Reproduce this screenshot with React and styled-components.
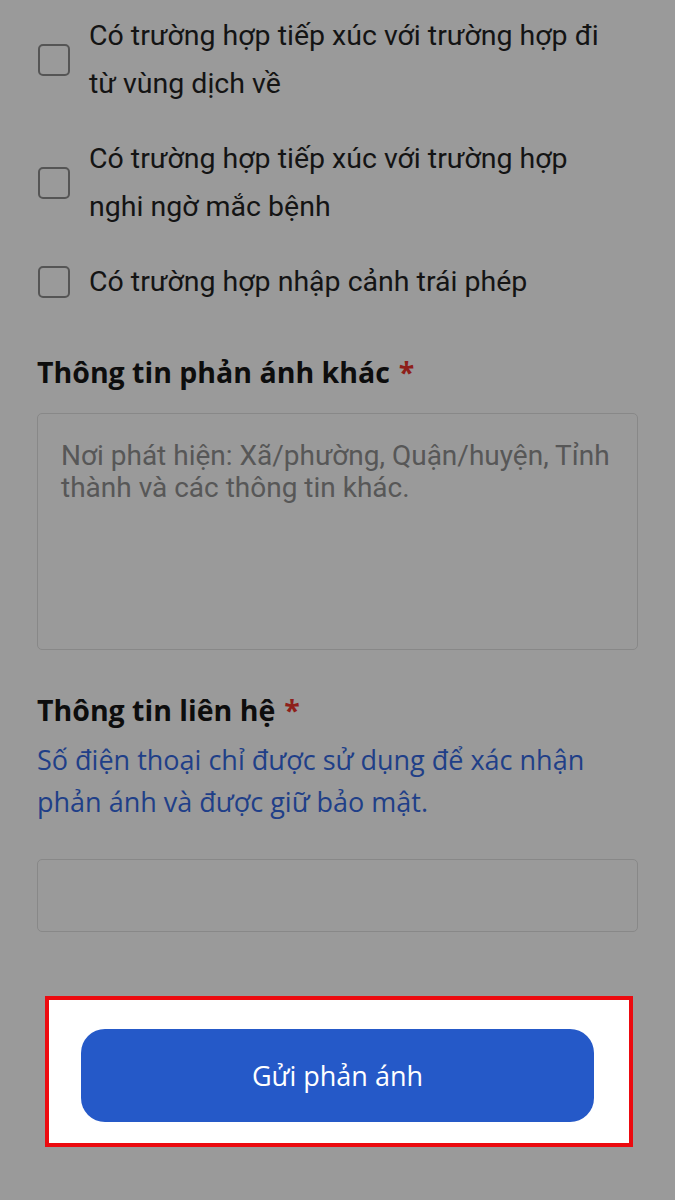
import React from "react";
import styled, { createGlobalStyle } from "styled-components";

const Global = createGlobalStyle`
  html, body { margin: 0; padding: 0; background: #9a9a9a; }
  * { box-sizing: border-box; }
`;

const Page = styled.div`
  width: 675px;
  min-height: 1200px;
  background: #9a9a9a;
  padding: 12px 37px 0 37px;
  display: flex;
  flex-direction: column;
`;

const CheckList = styled.div`
  display: flex;
  flex-direction: column;
  gap: 27px;
  padding: 0 12px 0 1px;
`;

const CheckRow = styled.label`
  display: flex;
  align-items: center;
  gap: 19px;
`;

const Box = styled.span`
  flex: 0 0 32px;
  width: 32px;
  height: 32px;
  border: 2px solid #555;
  border-radius: 5px;
`;

const CheckText = styled.span`
  font-family: Roboto, "Noto Sans", sans-serif;
  font-size: 28.5px;
  line-height: 48px;
  color: #141414;
`;

const Heading = styled.h2`
  margin: ${(p) => p.$mt}px 0 0 0;
  font-family: "Open Sans", sans-serif;
  font-weight: 700;
  font-size: 28.5px;
  line-height: 36px;
  color: #0d0d0d;
`;

const Star = styled.span`
  color: #8e1f1a;
  margin-left: 9px;
`;

const TextArea = styled.div`
  margin-top: 23px;
  height: 237px;
  border: 1.5px solid #888;
  border-radius: 5px;
  padding: 26px 23px 0 23px;
  font-family: Roboto, "Noto Sans", sans-serif;
  font-size: 28px;
  line-height: 31.5px;
  color: #575757;
`;

const Hint = styled.p`
  margin: 11px 0 0 0;
  font-family: "Open Sans", sans-serif;
  font-size: 27px;
  line-height: 42px;
  color: #1f3f88;
`;

const Input = styled.div`
  margin-top: 36px;
  height: 73px;
  border: 1.5px solid #888;
  border-radius: 5px;
`;

const Highlight = styled.div`
  margin: 64px 0 0 8px;
  width: 588px;
  height: 151px;
  border: 4px solid #ec0a0f;
  background: #ffffff;
  padding: 29px 0 0 32px;
`;

const SubmitButton = styled.button`
  width: 513px;
  height: 93px;
  border: none;
  border-radius: 24px;
  background: #2559c8;
  color: #ffffff;
  font-family: "Open Sans", sans-serif;
  font-size: 27px;
  display: flex;
  align-items: center;
  justify-content: center;
  padding: 0;
`;

const items = [
  "Có trường hợp tiếp xúc với trường hợp đi từ vùng dịch về",
  "Có trường hợp tiếp xúc với trường hợp nghi ngờ mắc bệnh",
  "Có trường hợp nhập cảnh trái phép",
];

export default function App() {
  return (
    <>
      <Global />
      <Page>
        <CheckList>
          {items.map((t) => (
            <CheckRow key={t}>
              <Box />
              <CheckText>{t}</CheckText>
            </CheckRow>
          ))}
        </CheckList>
        <Heading $mt={48}>
          Thông tin phản ánh khác<Star>*</Star>
        </Heading>
        <TextArea>
          Nơi phát hiện: Xã/phường, Quận/huyện, Tỉnh thành và các thông tin khác.
        </TextArea>
        <Heading $mt={42}>
          Thông tin liên hệ<Star>*</Star>
        </Heading>
        <Hint>
          Số điện thoại chỉ được sử dụng để xác nhận phản ánh và được giữ bảo mật.
        </Hint>
        <Input />
        <Highlight>
          <SubmitButton>Gửi phản ánh</SubmitButton>
        </Highlight>
      </Page>
    </>
  );
}
